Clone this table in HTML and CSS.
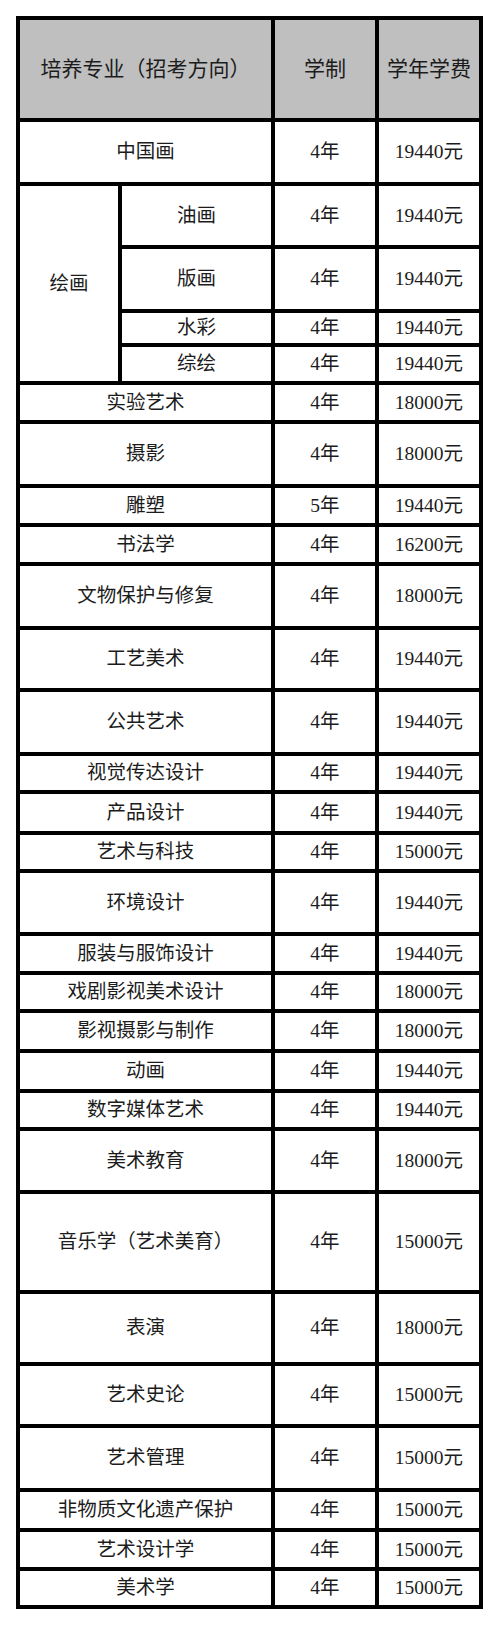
FILE: index.html
```html
<!DOCTYPE html>
<html lang="zh-CN">
<head>
<meta charset="utf-8">
<title>学费表</title>
<link rel="stylesheet" href="styles.css">
</head>
<body>
<div class="sheet">
  <div class="cell head wide">培养专业（招考方向）</div>
  <div class="cell head">学制</div>
  <div class="cell head">学年学费</div>

  <div class="cell wide">中国画</div><div class="cell">4年</div><div class="cell">19440元</div>

  <div class="cell group">绘画</div>
  <div class="cell">油画</div><div class="cell">4年</div><div class="cell">19440元</div>
  <div class="cell">版画</div><div class="cell">4年</div><div class="cell">19440元</div>
  <div class="cell">水彩</div><div class="cell">4年</div><div class="cell">19440元</div>
  <div class="cell">综绘</div><div class="cell">4年</div><div class="cell">19440元</div>

  <div class="cell wide">实验艺术</div><div class="cell">4年</div><div class="cell">18000元</div>
  <div class="cell wide">摄影</div><div class="cell">4年</div><div class="cell">18000元</div>
  <div class="cell wide">雕塑</div><div class="cell">5年</div><div class="cell">19440元</div>
  <div class="cell wide">书法学</div><div class="cell">4年</div><div class="cell">16200元</div>
  <div class="cell wide">文物保护与修复</div><div class="cell">4年</div><div class="cell">18000元</div>
  <div class="cell wide">工艺美术</div><div class="cell">4年</div><div class="cell">19440元</div>
  <div class="cell wide">公共艺术</div><div class="cell">4年</div><div class="cell">19440元</div>
  <div class="cell wide">视觉传达设计</div><div class="cell">4年</div><div class="cell">19440元</div>
  <div class="cell wide">产品设计</div><div class="cell">4年</div><div class="cell">19440元</div>
  <div class="cell wide">艺术与科技</div><div class="cell">4年</div><div class="cell">15000元</div>
  <div class="cell wide">环境设计</div><div class="cell">4年</div><div class="cell">19440元</div>
  <div class="cell wide">服装与服饰设计</div><div class="cell">4年</div><div class="cell">19440元</div>
  <div class="cell wide">戏剧影视美术设计</div><div class="cell">4年</div><div class="cell">18000元</div>
  <div class="cell wide">影视摄影与制作</div><div class="cell">4年</div><div class="cell">18000元</div>
  <div class="cell wide">动画</div><div class="cell">4年</div><div class="cell">19440元</div>
  <div class="cell wide">数字媒体艺术</div><div class="cell">4年</div><div class="cell">19440元</div>
  <div class="cell wide">美术教育</div><div class="cell">4年</div><div class="cell">18000元</div>
  <div class="cell wide">音乐学（艺术美育）</div><div class="cell">4年</div><div class="cell">15000元</div>
  <div class="cell wide">表演</div><div class="cell">4年</div><div class="cell">18000元</div>
  <div class="cell wide">艺术史论</div><div class="cell">4年</div><div class="cell">15000元</div>
  <div class="cell wide">艺术管理</div><div class="cell">4年</div><div class="cell">15000元</div>
  <div class="cell wide">非物质文化遗产保护</div><div class="cell">4年</div><div class="cell">15000元</div>
  <div class="cell wide">艺术设计学</div><div class="cell">4年</div><div class="cell">15000元</div>
  <div class="cell wide">美术学</div><div class="cell">4年</div><div class="cell">15000元</div>
</div>
</body>
</html>
```
FILE: styles.css
```css
html, body {
  margin: 0;
  padding: 0;
  background: #ffffff;
}

body {
  padding: 16px 0 17px 16px;
  font-family: "Liberation Serif", "Noto Sans CJK SC", serif;
  color: #1c1c1c;
}

.sheet {
  width: 467px;
  box-sizing: border-box;
  display: grid;
  grid-template-columns: 98px 149px 100px 100px;
  grid-template-rows:
    98px 60px 59px 60px 30px 34px 35px 60px 35px 35px
    60px 58px 60px 34px 37px 34px 59px 35px 34px 36px
    36px 34px 59px 96px 68px 58px 60px 36px 35px 34px;
  gap: 4px;
  padding: 4px;
  background: #000000;
}

.cell {
  background: #ffffff;
  display: flex;
  align-items: center;
  justify-content: center;
  font-size: 19.5px;
  line-height: 1;
  white-space: nowrap;
}

.wide {
  grid-column: span 2;
}

.group {
  grid-row: span 4;
}

.head {
  background: #bfbfbf;
  font-size: 21px;
}
```
